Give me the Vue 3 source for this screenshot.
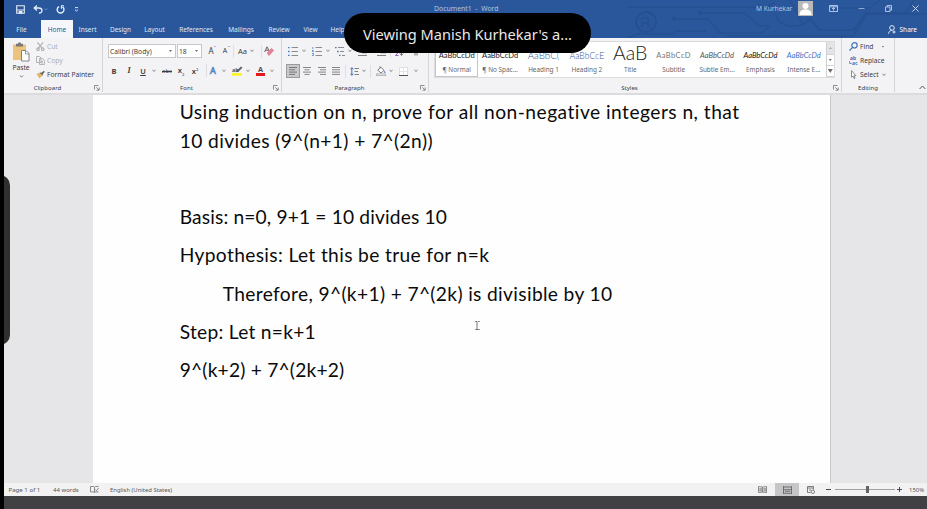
<script setup>
const tabs = [
  { t: 'File', k: 'file' }, { t: 'Home', k: 'home' }, { t: 'Insert', k: 'insert' }, { t: 'Design', k: 'design' },
  { t: 'Layout', k: 'layout' }, { t: 'References', k: 'refs' }, { t: 'Mailings', k: 'mail' },
  { t: 'Review', k: 'review' }, { t: 'View', k: 'view' }, { t: 'Help', k: 'help' }
]
const styles = [
  { s: 'AaBbCcDd', n: '¶ Normal', k: 'normal' },
  { s: 'AaBbCcDd', n: '¶ No Spac...', k: 'nospace' },
  { s: 'AaBbC(', n: 'Heading 1', k: 'h1s' },
  { s: 'AaBbCcE', n: 'Heading 2', k: 'h2s' },
  { s: 'AaB', n: 'Title', k: 'titles' },
  { s: 'AaBbCcD', n: 'Subtitle', k: 'subtitle' },
  { s: 'AaBbCcDd', n: 'Subtle Em...', k: 'subtle' },
  { s: 'AaBbCcDd', n: 'Emphasis', k: 'emph' },
  { s: 'AaBbCcDd', n: 'Intense E...', k: 'intense' }
]
</script>

<template>
  <div class="screen">
    <div class="window">
      <header class="top">
        <svg class="circuit" width="300" height="38" viewBox="627 0 300 38" fill="none">
          <circle cx="646" cy="22" r="10" stroke-width="2" />
          <path d="M642 27v-9h6v5h-6m4 0l4 4M627 37h5l3-3h38l3-3h30M627 7h142l5-5M674 19h34l12 14h42l8-7M700 13h45l14 13h10M727 36h126l14-22h60M776 16c4 12 24 14 34 3l10 11h34l12-17h40l8-13" stroke-width="1.6" />
          <path d="M790 0l14 26M880 0l-10 8h-30" stroke-width="1.4" />
          <g class="dots"><circle cx="769" cy="7" r="2" /><circle cx="674" cy="19" r="2" /><circle cx="700" cy="13" r="1.6" /></g>
        </svg>
        <div class="titlebar">
          <div class="quick">
            <svg width="9" height="9" viewBox="0 0 9 9"><path d="M.7.7h7.6v7.6H.7z" fill="none" stroke="#e6eefa" stroke-width="1.1" /><path d="M1 4.6h7v1H1zM2.6 6h3.8v2.5H2.6z" fill="#e6eefa" /></svg>
            <svg width="10" height="9" viewBox="0 0 10 9" fill="none" stroke="#e6eefa" stroke-width="1.3"><path d="M4 .6L1.2 3 4 5.4M1.2 3h4.6C10 3 10 8 6 8" /></svg>
            <svg width="4" height="3" viewBox="0 0 4 3"><path d="M.5.5L2 2 3.500.5" fill="none" stroke="#5f86c2" /></svg>
            <svg width="9" height="9" viewBox="0 0 9 9" fill="none" stroke="#e6eefa" stroke-width="1.4"><path d="M3 1.600A3.400 3.400 0 1 0 6.600 1.900" /><path d="M5 .7h2.900M5.400.7v3" stroke-width="1.1" /></svg>
            <svg width="5" height="5" viewBox="0 0 5 5" fill="none" stroke="#d5e0f2"><path d="M1 .6h3M.9 2.600l1.600 1.500L4.100 2.600" /></svg>
          </div>
          <div class="doctitle">Document1 &nbsp;-&nbsp; Word</div>
          <div class="user">M Kurhekar</div>
          <svg class="avatar" width="15" height="15" viewBox="0 0 15 15"><path d="M0 0h15v15H0z" fill="#b9b9bb" /><circle cx="7.500" cy="5" r="3" fill="#fff" /><path d="M1.500 14c0-4 2-5.500 6-5.500s6 1.500 6 5.500z" fill="#fff" /></svg>
          <div class="winbtns">
            <svg width="9" height="7" viewBox="0 0 9 7" fill="none" stroke="#bdcde8" stroke-width=".9"><path d="M.5.5h8v6h-8zM.5 1.800h8M4.500 5.500v-3M3 4l1.500-1.500L6 4" /></svg>
            <svg width="7" height="7" viewBox="0 0 7 7" stroke="#8ba6d2"><path d="M.5 3.500h6" /></svg>
            <svg width="7" height="7" viewBox="0 0 7 7" fill="none" stroke="#bdcde8" stroke-width=".9"><path d="M.5 2h4.500v4.500H.5zM2 2V.5h4.500v4.600H5" /></svg>
            <svg width="7" height="7" viewBox="0 0 7 7" stroke="#d3deef" stroke-width=".9"><path d="M.5.5l6 6M6.500.5l-6 6" /></svg>
          </div>
        </div>
        <nav class="tabs">
          <div v-for="t in tabs" :key="t.k" class="tab" :class="t.k">{{ t.t }}</div>
          <div class="share">
            <svg width="8" height="9" viewBox="0 0 8 9" fill="none" stroke="#e6eefa"><circle cx="4" cy="2.900" r="2.300" /><path d="M.6 8.700c0-2 1.300-3 3-3.300M4.500 7h3M6 5.500v3" /></svg>
            <span>Share</span>
          </div>
        </nav>
      </header>

      <section class="ribbon">
        <div class="group clipboard">
          <div class="body clip">
            <div class="paste">
              <svg width="18" height="20" viewBox="0 0 18 20"><path d="M1 2.500h13V18H1z" fill="#ebc37c" /><path d="M4 1.800h2a1.500 1.500 0 0 1 3 0h2v2.700H4z" fill="#77777a" /><path d="M9.500 8.500h4.500l3 3V19H9.500z" fill="#fff" stroke="#77777a" stroke-width=".9" /><path d="M13.500 8.500V12H17" fill="none" stroke="#77777a" stroke-width=".7" /></svg>
              <span>Paste</span>
              <svg class="chev" width="5" height="3" viewBox="0 0 5 3"><path d="M.9.500l1.600 1.600L4.100.500" /></svg>
            </div>
            <div class="cliplist">
              <div class="off"><svg width="9" height="9" viewBox="0 0 9 9" fill="none" stroke="#aeaeb0" stroke-width="1.100"><path d="M1.500.3l4.600 6M7 .3l-4.600 6" /><circle cx="2" cy="7.200" r="1.300" /><circle cx="6.700" cy="7.200" r="1.300" /></svg>Cut</div>
              <div class="off"><svg width="9" height="9" viewBox="0 0 9 9" fill="#f3f3f5" stroke="#aeaeb0" stroke-width=".9"><path d="M.5.5h3l1.500 1.500v4.500H.5zM3.500 2.500h3L8.400 4.200v4.300H3.500zM5 5.300h2M5 6.900h2" /></svg>Copy</div>
              <div><svg width="9" height="9" viewBox="0 0 9 9"><path d="M.5 4L4 2.800l2.300 3L3.500 8.500z" fill="#e6b465" /><path d="M3.500 2.500l2 .3L8 .7l.7 1.200-2 2L6.900 6z" fill="#5b5b5e" /></svg>Format Painter</div>
            </div>
          </div>
          <footer><b>Clipboard</b><svg class="launch" width="6" height="6" viewBox="0 0 6 6"><path d="M.5 4.500v-4h4M2.300 2.300l2.600 2.600M5.200 2.500v2.700H2.500" /></svg></footer>
        </div>

        <div class="group font">
          <div class="body">
            <div class="row f1">
              <div class="combo"><span>Calibri (Body)</span><i class="tri"></i></div>
              <div class="combo"><span>18</span><i class="tri"></i></div>
              <div class="ga">A<sup>ˆ</sup></div><div class="ga small">A<sup>ˇ</sup></div><i class="sep"></i>
              <div class="aa">Aa</div><i class="v"></i><i class="sep"></i>
              <svg width="10" height="10" viewBox="0 0 10 10"><path d="M.7 6L3 .8 5.200 5M1.500 4.200h3" fill="none" stroke="#626264" /><path d="M3 6.500l4.500-4.500 2.500 2.500L5.500 9.500H4z" fill="#e58095" /></svg>
            </div>
            <div class="row f2">
              <div class="fb">B</div><div class="fi">I</div><div class="fu">U</div><i class="v"></i>
              <div class="fs">abc</div><div class="fx">x<sub>2</sub></div><div class="fx">x<sup>2</sup></div><i class="sep"></i>
              <div class="glow">A</div><i class="v"></i>
              <svg width="11" height="10" viewBox="0 0 11 10"><path d="M0 7h10v2.700H0z" fill="#fbf523" /><path d="M4 6.200l1-2L9 .5l1.500 1.300-4 4z" fill="#656568" /><text x="0" y="5.500" font-size="5.500" font-weight="700" fill="#555">ab</text></svg>
              <i class="v"></i><div class="red">A</div><i class="v"></i>
            </div>
          </div>
          <footer><b>Font</b><svg class="launch" width="6" height="6" viewBox="0 0 6 6"><path d="M.5 4.500v-4h4M2.300 2.300l2.600 2.600M5.200 2.500v2.700H2.500" /></svg></footer>
        </div>

        <div class="group para">
          <div class="body">
            <div class="row p1">
              <svg width="10" height="9" viewBox="0 0 10 9"><path d="M0 .5h1.600M0 4.500h1.600M0 8.500h1.600" stroke="#4d7dc0" stroke-width="1.300" /><path d="M3.500.5H10M3.500 4.500H10M3.500 8.500H10" stroke="#8c8c8f" /></svg><i class="v"></i>
              <svg width="10" height="9" viewBox="0 0 10 9"><path d="M.8 0v2M0 3.500h1.300v1H0M0 6.500h1.500v2H0" fill="none" stroke="#4d7dc0" stroke-width=".8" /><path d="M3.500.5H10M3.500 4.500H10M3.500 8.500H10" stroke="#8c8c8f" /></svg><i class="v"></i>
              <svg width="10" height="9" viewBox="0 0 10 9"><path d="M0 .5h1.600M2 4.500h1.600M4 8.500h1.500" stroke="#4d7dc0" stroke-width="1.300" /><path d="M3 .5h6M5 4.500h4M7 8.500h3" stroke="#8c8c8f" /></svg><i class="v"></i>
              <svg width="9" height="9" viewBox="0 0 9 9"><path d="M0 .5h9M4 3.200h5M4 5.800h5M0 8.500h9" stroke="#808083" /></svg>
              <svg width="9" height="9" viewBox="0 0 9 9"><path d="M0 .5h9M4 3.200h5M4 5.800h5M0 8.500h9" stroke="#808083" /></svg>
              <i class="sep"></i>
              <svg width="9" height="9" viewBox="0 0 9 9" fill="none"><path d="M.5 5h3l-3 3.500h3" stroke="#8c63b5" /><path d="M6.500 0v8M5 6.500l1.500 2L8 6.500" stroke="#707073" /></svg>
              <svg width="8" height="9" viewBox="0 0 8 9" stroke="#707073" fill="none"><path d="M4 0v8.500M6 0v8.500M4 .5H2.500v3H4" /></svg>
            </div>
            <div class="row p2">
              <div class="on"><svg width="8" height="8" viewBox="0 0 8 8" stroke="#707073"><path d="M0 .5h8M0 2.800h6M0 5.100h8M0 7.400h6" stroke-width=".9" /></svg></div>
              <svg width="8" height="8" viewBox="0 0 8 8" stroke="#77777a" stroke-width=".9"><path d="M0 .5h8M1.500 2.800h5M0 5.100h8M1.500 7.400h5" /></svg>
              <svg width="8" height="8" viewBox="0 0 8 8" stroke="#77777a" stroke-width=".9"><path d="M0 .5h8M2 2.800h6M0 5.100h8M2 7.400h6" /></svg>
              <svg width="8" height="8" viewBox="0 0 8 8" stroke="#77777a" stroke-width=".9"><path d="M0 .5h8M0 2.800h8M0 5.100h8M0 7.400h8" /></svg>
              <i class="sep"></i>
              <svg width="9" height="9" viewBox="0 0 9 9" fill="none"><path d="M1.800.8v7.400M.3 2.300L1.800.7l1.500 1.600M.3 6.700l1.500 1.600 1.500-1.600" stroke="#3f73ba" /><path d="M4.500 1.500H9M4.500 4.500H8M4.500 7.500H9" stroke="#808083" /></svg><i class="v"></i>
              <i class="sep"></i>
              <svg width="10" height="10" viewBox="0 0 10 10"><path d="M1.800 4.200L5 1.300l3 3L5 7zM4 2V.3" fill="#fff" stroke="#6c6c6f" stroke-width=".9" /><path d="M8.700 4.500l1 2.300H8z" fill="#3f73ba" /><path d="M0 8h9.500v1.700H0z" fill="#fff" stroke="#8c8c8f" stroke-width=".7" /></svg><i class="v"></i>
              <svg width="9" height="9" viewBox="0 0 9 9"><path d="M.5.5h8v8h-8z" fill="#fff" stroke="#dedee1" /><path d="M4.500 1v7M1 4.500h7" stroke="#e4e4e7" /><path d="M0 8.500h9" stroke="#515154" /></svg><i class="v"></i>
            </div>
          </div>
          <footer><b>Paragraph</b><svg class="launch" width="6" height="6" viewBox="0 0 6 6"><path d="M.5 4.500v-4h4M2.300 2.300l2.600 2.600M5.200 2.500v2.700H2.500" /></svg></footer>
        </div>

        <div class="group stylegroup">
          <div class="body">
            <div class="gallery">
              <div v-for="s in styles" :key="s.k" class="style" :class="s.k"><div class="sample">{{ s.s }}</div><div class="name">{{ s.n }}</div></div>
              <div class="scroller">
                <div class="dim"><i class="tri up"></i></div><div><i class="tri"></i></div><div><i class="tri more"></i></div>
              </div>
            </div>
          </div>
          <footer><b>Styles</b><svg class="launch" width="6" height="6" viewBox="0 0 6 6"><path d="M.5 4.500v-4h4M2.300 2.300l2.600 2.600M5.200 2.500v2.700H2.500" /></svg></footer>
        </div>

        <div class="group editing">
          <div class="body edits">
            <div><svg width="9" height="9" viewBox="0 0 9 9" fill="none" stroke="#3f73ba" stroke-width="1.200"><circle cx="5.500" cy="3.300" r="2.700" /><path d="M3.600 5.300L.5 8.500" /></svg>Find<i class="tri far"></i></div>
            <div><svg width="9" height="9" viewBox="0 0 9 9"><text x="1" y="4" font-size="5" font-weight="700" fill="#6c5a9c">ab</text><text x="3" y="9" font-size="5" font-weight="700" fill="#4373b9">ac</text><path d="M.7 5v2.500h2" fill="none" stroke="#4373b9" stroke-width=".8" /></svg>Replace</div>
            <div><svg width="9" height="9" viewBox="0 0 9 9" fill="#fff" stroke="#747477" stroke-width=".8"><path d="M2.500.6v6.600L4 6l1 2.500 1-.4-1-2.400h1.900z" /></svg>Select<i class="v near"></i></div>
          </div>
          <footer><b>Editing</b></footer>
        </div>
        <div class="collapse"><svg width="7" height="5" viewBox="0 0 7 5" fill="none" stroke="#555558"><path d="M.6 4l2.900-3 2.900 3" /></svg></div>
      </section>

      <main class="canvas">
        <article class="page">
          <p class="l1">Using induction on n, prove for all non-negative integers n, that</p>
          <p class="l2">10 divides (9^(n+1) + 7^(2n))</p>
          <p class="l3">Basis: n=0, 9+1 = 10 divides 10</p>
          <p class="l4">Hypothesis: Let this be true for n=k</p>
          <p class="l5">Therefore, 9^(k+1) + 7^(2k) is divisible by 10</p>
          <p class="l6">Step: Let n=k+1</p>
          <p class="l7">9^(k+2) + 7^(2k+2)</p>
        </article>
      </main>

      <footer class="status">
        <span class="pg">Page 1 of 1</span><span class="wc">44 words</span>
        <svg class="proof" width="9" height="7" viewBox="0 0 9 7" fill="none" stroke="#707073" stroke-width=".8"><path d="M.5.5h3l1 .8v5.200l-1-.6h-3zM4.500 1.300l1-.8h3M4.500 6.500l1-.6h3M5.500 3.500l1 1.200L8.600 2" /></svg>
        <span class="lang">English (United States)</span>
        <div class="views">
          <svg width="9" height="7" viewBox="0 0 9 7" fill="none" stroke="#707073" stroke-width=".8"><path d="M.5.500v6l4-.4 4 .4v-6l-4 .6zM4.500 1v5.400M2 2v3.500M3.200 2v3.500M6 2v3.500M7.200 2v3.500" /></svg>
          <div class="active"><svg width="9" height="8" viewBox="0 0 9 8" stroke="#666669" stroke-width=".9" fill="none"><path d="M.5 0v8M8.500 0v8M.5 1h8M.5 3.700h8M2 5.300h5M.5 7.300h8" /></svg></div>
          <svg width="8" height="8" viewBox="0 0 8 8" fill="none" stroke="#707073" stroke-width=".9"><path d="M3.500 6.500h-3v-6h6v3M.5 2h6M2 4h2" /><circle cx="5.800" cy="5.800" r="1.700" /></svg>
        </div>
        <div class="zoom"><i class="minus"></i><div class="track"><i class="thumb"></i></div><i class="plus"></i><span>150%</span></div>
      </footer>
    </div>
    <div class="strip"></div>
    <div class="handle"></div>
    <div class="pill">Viewing Manish Kurhekar's a...</div>
    <svg class="ibeam" width="5" height="9" viewBox="0 0 5 9" fill="none" stroke="#555" stroke-width=".8"><path d="M.3.500h1.700M3 .500h1.700M2 .5v8M.3 8.500h4.400" /></svg>
  </div>
</template>

<style>
body { margin: 0; background: #000; overflow: hidden; }
</style>

<style scoped>
* { box-sizing: border-box; }
.screen { position: relative; width: 927px; height: 509px; background: #000; display: flex; flex-direction: column; font-family: "Noto Sans", sans-serif; font-size: 6.7px; color: #3c3c3f; white-space: nowrap; overflow: hidden; }
.window { height: 496px; margin-left: 4px; display: flex; flex-direction: column; }
.strip { height: 13px; margin-left: 4px; background: #414042; }
svg { display: block; flex: none; }
.top { position: relative; height: 38px; background: #2a579b; flex: none; }
.circuit { position: absolute; right: 0; top: 0; stroke: #265091; }
.dots { fill: #265091; }
.titlebar { position: relative; height: 20px; display: grid; grid-template-columns: 430px 322px 42px 17px 1fr; align-items: start; }
.quick { display: grid; grid-template-columns: 17px 11px 12px 18px 8px; padding-left: 12px; height: 18px; align-items: center; }
.doctitle, .user { font-size: 6.8px; line-height: 17px; color: #b3c4df; }
.doctitle { letter-spacing: .05px; }
.user { font-size: 6.6px; }
.avatar { margin-top: 1px; }
.winbtns { display: grid; grid-template-columns: 28px 28px 26px 29px; justify-items: center; align-items: center; height: 17px; padding-left: 4px; }
.tabs { position: relative; display: flex; height: 18px; line-height: 19px; color: #dfe7f4; font-size: 6.5px; }
.tab { text-align: center; }
.file { width: 35px; }
.home { width: 32px; margin-left: 2px; background: #f5f6f9; color: #2a579b; height: 18px; }
.insert { width: 29px; }
.design { width: 37px; }
.layout { width: 31px; }
.refs { width: 52px; }
.mail { width: 38px; }
.review { width: 38px; }
.view { width: 25px; }
.help { width: 29px; }
.share { display: flex; align-items: center; gap: 4px; margin-left: auto; margin-right: 10px; color: #fff; }

.ribbon { height: 57px; background: #f3f3f5; display: flex; border-bottom: 2px solid #dcdcde; flex: none; }
.group { display: flex; flex-direction: column; border-right: 1px solid #d5d5d8; height: 54px; }
.group footer { display: flex; height: 11px; align-items: center; padding-top: 3px; }
.group footer b { font-weight: 400; font-size: 6.1px; line-height: 8px; flex: 1; text-align: center; padding-right: 3px; }
.group.editing footer b { padding-right: 0; }
.launch { margin-right: 2px; fill: none; stroke: #727275; stroke-width: .8; }
.body { height: 43px; flex: none; }
.clipboard { width: 99px; }
.font { width: 179px; }
.para { width: 147px; }
.stylegroup { width: 413px; }
.editing { width: 53px; }
.clip { display: flex; }
.paste { width: 34px; padding-top: 4px; display: flex; flex-direction: column; align-items: center; }
.paste span { line-height: 10px; margin-top: 1px; }
.chev { fill: none; stroke: #6c6c6f; stroke-width: .9; margin-top: 2px; }
.cliplist, .edits { display: grid; grid-template-rows: 14px 14px 14px; padding-top: 1.500px; }
.cliplist > div, .edits > div { display: flex; align-items: center; }
.cliplist svg { margin: 0 2px 0 -2px; }
.off { color: #adadb0; }
.edits { padding-left: 7px; }
.edits svg { margin-right: 2px; }
.far { margin-left: 8px; }
.near { margin-left: 3px; }

.row { display: grid; align-items: center; justify-items: center; height: 20px; }
.f1 { grid-template-columns: 69px 25px 18px 10px 7px 11px 8px 10px 6px; margin-left: 5px; padding: 3px 0; height: 26px; }
.f1 .combo { width: 100%; height: 14px; background: #fff; border: 1px solid #c8c8cb; display: flex; align-items: center; padding: 0 3px 0 1px; font-size: 6.7px; }
.f1 .combo:first-child { width: 68px; justify-self: start; }
.combo span { flex: 1; }
.tri { width: 3px; height: 2px; background: #6c6c6f; clip-path: polygon(0 0, 100% 0, 50% 100%); }
.up { transform: rotate(180deg); background: #aaa; }
.more { width: 5px; height: 4px; }
.v { width: 4px; height: 4px; border: solid #77777a; border-width: 0 .9px .9px 0; transform: rotate(45deg) scale(.65); margin-top: -2px; }
.sep { width: 1px; height: 13px; background: #dedee1; }
.ga { font-size: 8px; position: relative; line-height: 10px; }
.ga sup { position: absolute; top: -3px; left: 5px; font-size: 6px; color: #3f73ba; line-height: 10px; }
.ga.small { font-size: 7px; }
.aa { font-size: 7.500px; }
.f2 { grid-template-columns: 14px 16px 12px 10px 16px 12px 16px 6px 8px 13px 14px 8px 17px 5px; margin-left: 4px; height: 12px; font-size: 7.500px; }
.fb { font-weight: 700; }
.fi { font-style: italic; font-family: "Liberation Serif", serif; font-weight: 700; font-size: 8px; }
.fu { text-decoration: underline; font-weight: 600; }
.fs { text-decoration: line-through; font-size: 6px; }
.fx { font-weight: 600; line-height: 8px; }
.fx sub, .fx sup { font-size: 4px; color: #3f73ba; line-height: 0; }
.glow { font-size: 9px; line-height: 10px; color: #fff; -webkit-text-stroke: .7px #4f83c6; }
.red { line-height: 7px; border-bottom: 3px solid #e3191c; width: 9px; text-align: center; font-weight: 600; }
.p1 { grid-template-columns: 14px 8px 17px 5px 19px 2px 23px 14px 4px 14px 18px; margin-left: 4px; height: 26px; }
.p2 { grid-template-columns: 14px 14px 15px 14px 4px 14px 5px 8px 14px 6px 19px 5px; margin-left: 4px; height: 12px; }
.on { width: 14px; height: 14px; background: #c9c9cb; border: 1px solid #9a9a9d; display: grid; place-items: center; }
.gallery { margin: 3px 0 0 5px; width: 401px; height: 37px; border: 1px solid #dcdcdf; background: #fff; display: grid; grid-template-columns: repeat(9, 43.400px) 1fr; }
.style { text-align: center; height: 35px; display: flex; flex-direction: column; justify-content: space-between; overflow: hidden; color: #666669; padding-top: 7px; }
.normal { border: 1.500px solid #c6c6c9; padding-top: 6px; }
.name { line-height: 10px; font-size: 6.400px; height: 12px; }
.normal .name { height: 11px; }
.sample { font-family: Lato, sans-serif; font-size: 7.500px; line-height: 13px; height: 13px; color: #222; }
.h1s .sample { font-size: 9.800px; font-weight: 300; color: #2f5496; }
.h2s .sample { font-size: 8.700px; font-weight: 300; color: #2f5496; }
.style.titles { padding-top: 2px; }
.titles .sample { font-size: 19.500px; line-height: 17px; height: 17px; font-weight: 300; }
.subtitle .sample { color: #77777a; letter-spacing: .4px; }
.subtle .sample { font-style: italic; color: #555558; }
.emph .sample { font-style: italic; color: #111; }
.intense .sample { font-style: italic; color: #4472c4; }
.scroller { border-left: 1px solid #cfcfd2; display: grid; grid-template-rows: 13px 11px 11px; }
.scroller div { display: grid; place-items: center; border-bottom: 1px solid #d3d3d6; }
.scroller .dim { background: #e4e4e6; }
.collapse { flex: 1; display: flex; justify-content: flex-end; align-items: flex-end; padding: 0 1px 3px; }

.canvas { height: 388px; background: #e6e6e8; display: flex; flex: none; }
.page { width: 738px; margin-left: 89px; background: #fefefe; border-right: 1px solid #c8c8ca; padding: 2px 0 0 86.700px; font-family: Lato, sans-serif; font-size: 19.200px; color: #0b0b0b; }
.page p { margin: 0; line-height: 29px; height: 29px; }
.page .l1 { letter-spacing: .47px; }
.page .l2 { height: 76px; letter-spacing: .4px; }
.page .l3, .page .l4, .page .l5, .page .l6 { height: 38.300px; }
.page .l3 { letter-spacing: .15px; }
.page .l4 { letter-spacing: .36px; }
.page .l5 { padding-left: 43px; letter-spacing: .35px; }
.page .l6 { letter-spacing: .27px; }
.page .l7 { letter-spacing: .2px; }

.status { height: 13px; background: #f2f2f3; display: flex; align-items: center; font-size: 6px; color: #555558; }
.pg { width: 49px; padding-left: 4.500px; font-size: 6.1px; }
.wc { width: 37px; }
.proof { margin-right: 11px; }
.lang { font-size: 5.900px; }
.views { margin-left: auto; display: grid; grid-template-columns: 17px 24px 23px; align-items: center; justify-items: center; height: 13px; }
.views > svg:first-child { justify-self: start; }
.active { width: 24px; height: 13px; background: #c6c6c8; display: grid; place-items: center; }
.zoom { display: flex; align-items: center; width: 105px; padding-left: 4px; }
.minus { width: 5px; height: 1px; background: #4a4a4d; margin-right: 4px; }
.track { width: 60px; height: 1px; background: #a0a0a3; display: flex; align-items: center; margin-right: 2px; flex: none; }
.thumb { width: 3px; height: 7px; background: #626265; margin-left: 31px; flex: none; }
.plus { width: 5px; height: 5px; background: linear-gradient(#4a4a4d, #4a4a4d) center / 5px 1px no-repeat, linear-gradient(#4a4a4d, #4a4a4d) center / 1px 5px no-repeat; margin-right: 7px; }
.handle { position: absolute; left: -10px; top: 175px; width: 20px; height: 170px; border-radius: 10px; background: linear-gradient(90deg, #000 14px, #2f2f2f 14px); }
.pill { position: absolute; left: 344px; top: 13px; width: 247px; height: 40px; border-radius: 20px; background: #000; color: #e8e8e8; font-size: 14.600px; line-height: 42px; text-align: center; }
.ibeam { position: absolute; left: 475px; top: 321px; }
</style>
